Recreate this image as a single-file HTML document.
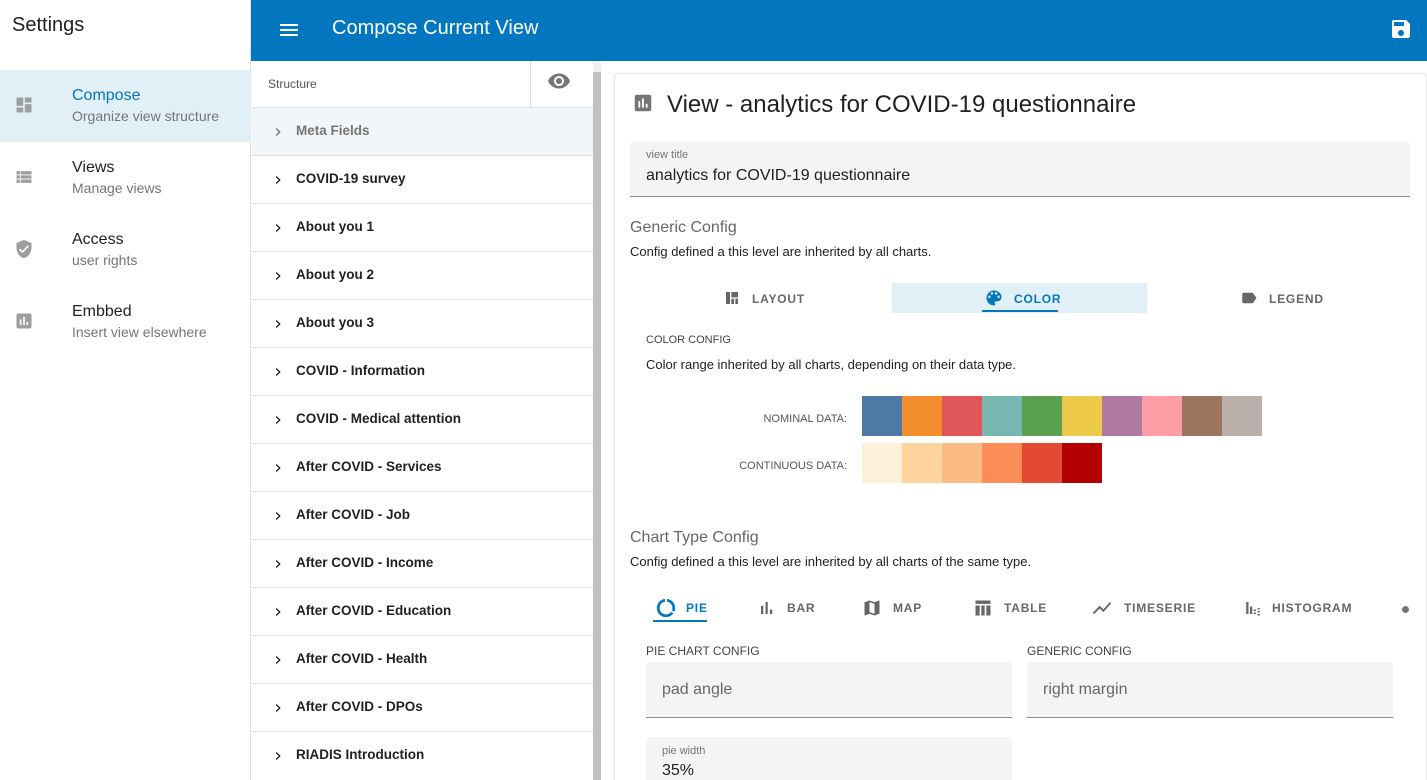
<!DOCTYPE html>
<html><head><style>
*{box-sizing:border-box;margin:0;padding:0}
html,body{width:1427px;height:780px;overflow:hidden}
body{font-family:"Liberation Sans",sans-serif;background:#fff;position:relative;color:#212121}
.abs{position:absolute}
#side{left:0;top:0;width:251px;height:780px;border-right:1px solid #e0e0e0;background:#fff}
#side h1{position:absolute;left:12px;top:14px;font-size:20px;font-weight:normal;color:#212121}
.nav{position:absolute;left:0;width:251px;height:72px}
.nav .t{position:absolute;left:72px;top:17px;font-size:16px;color:#212121}
.nav .s{position:absolute;left:72px;top:38px;font-size:14px;color:#757575}
.nav svg{position:absolute;left:14px;top:25px}
#hdr{left:251px;top:0;width:1176px;height:61px;background:#0277bf;color:#fff}
#struct{left:252px;top:61px;width:341px;height:719px;background:#fff;overflow:hidden}
.row{position:absolute;left:0;width:341px;height:48px;border-bottom:1px solid #e0e0e0;font-size:13.5px;font-weight:bold}
.row span{position:absolute;left:44px;top:15px}
.row svg{position:absolute;left:18px;top:16px}
#scroll{left:593px;top:61px;width:8px;height:719px;background:#f1f1f1}
#card{left:614px;top:73px;width:813px;height:707px;border:1px solid #e8e8e8;border-bottom:none;border-radius:4px 4px 0 0;box-shadow:0 1px 3px rgba(0,0,0,.12);background:#fff;overflow:hidden}
.field{position:absolute;background:#f4f4f4;border-bottom:1px solid #8a8a8a;border-radius:4px 4px 0 0}
.lbl{font-size:12px;color:#757575}
.tab{position:absolute;font-size:12px;letter-spacing:.8px;color:#666;font-weight:bold}
.sw{position:absolute;width:40px;height:40px}
</style></head><body>
<div id="side" class="abs">
<h1>Settings</h1>
<div class="nav" style="top:70px;background:#e1eff7">
<svg width="20" height="20" viewBox="0 0 24 24"><path fill="#9e9e9e" d="M3 13h8V3H3zm0 8h8v-6H3zm10 0h8V11h-8zm0-18v6h8V3z"/></svg>
<div class="t" style="color:#0277bd">Compose</div><div class="s">Organize view structure</div></div>
<div class="nav" style="top:142px">
<svg width="20" height="20" viewBox="0 0 24 24"><path fill="#9e9e9e" d="M3 14h4v-4H3zm0 5h4v-4H3zM3 9h4V5H3zm5 5h13v-4H8zm0 5h13v-4H8zM8 5v4h13V5z"/></svg>
<div class="t">Views</div><div class="s">Manage views</div></div>
<div class="nav" style="top:214px">
<svg width="20" height="20" viewBox="0 0 24 24"><path fill="#9e9e9e" d="M12 1L3 5v6c0 5.55 3.84 10.74 9 12 5.160-1.26 9-6.45 9-12V5zm-2 16l-4-4 1.41-1.41L10 14.17l6.59-6.590L18 9z"/></svg>
<div class="t">Access</div><div class="s">user rights</div></div>
<div class="nav" style="top:286px">
<svg width="20" height="20" viewBox="0 0 24 24"><path fill="#9e9e9e" d="M19 3H5c-1.1 0-2 .9-2 2v14c0 1.1.9 2 2 2h14c1.1 0 2-.9 2-2V5c0-1.1-.9-2-2-2zM9 17H7v-7h2zm4 0h-2V7h2zm4 0h-2v-4h2z"/></svg>
<div class="t">Embbed</div><div class="s">Insert view elsewhere</div></div>
</div>
<div id="hdr" class="abs">
<svg class="abs" style="left:26px;top:18px" width="24" height="24" viewBox="0 0 24 24"><path fill="#fff" d="M3 18h18v-2H3zm0-5h18v-2H3zm0-7v2h18V6z"/></svg>
<div class="abs" style="left:81px;top:17px;font-size:20px">Compose Current View</div>
<svg class="abs" style="left:1138px;top:17px" width="24" height="24" viewBox="0 0 24 24"><path fill="#fff" d="M17 3H5a2 2 0 0 0-2 2v14a2 2 0 0 0 2 2h14c1.1 0 2-.9 2-2V7zm-5 16c-1.66 0-3-1.34-3-3s1.34-3 3-3 3 1.34 3 3-1.34 3-3 3zm3-10H5V5h10z"/></svg>
</div>
<div id="struct" class="abs">
<div class="abs" style="left:0;top:0;width:341px;height:47px;border-bottom:1px solid #e0e0e0">
<div class="abs" style="left:16px;top:16px;font-size:12px;color:#555">Structure</div>
<div class="abs" style="left:278px;top:0;width:1px;height:47px;background:#e0e0e0"></div>
<svg class="abs" style="left:295px;top:8px" width="24" height="24" viewBox="0 0 24 24"><path fill="#757575" d="M12 4.5C7 4.5 2.730 7.61 1 12c1.73 4.39 6 7.5 11 7.5s9.27-3.11 11-7.5c-1.73-4.39-6-7.5-11-7.5zM12 17c-2.76 0-5-2.24-5-5s2.24-5 5-5 5 2.24 5 5-2.24 5-5 5zm0-8c-1.66 0-3 1.34-3 3s1.34 3 3 3 3-1.34 3-3-1.34-3-3-3z"/></svg>
</div>
<div class="row" style="top:47px;background:#f3f6f9;color:#757575"><svg width="16" height="16" viewBox="0 0 24 24"><path fill="#757575" d="M10 6L8.59 7.41 13.17 12l-4.58 4.59L10 18l6-6z"/></svg><span>Meta Fields</span></div>
<div class="row" style="top:95px"><svg width="16" height="16" viewBox="0 0 24 24"><path fill="#212121" d="M10 6L8.59 7.41 13.17 12l-4.58 4.59L10 18l6-6z"/></svg><span>COVID-19 survey</span></div>
<div class="row" style="top:143px"><svg width="16" height="16" viewBox="0 0 24 24"><path fill="#212121" d="M10 6L8.59 7.41 13.17 12l-4.58 4.59L10 18l6-6z"/></svg><span>About you 1</span></div>
<div class="row" style="top:191px"><svg width="16" height="16" viewBox="0 0 24 24"><path fill="#212121" d="M10 6L8.59 7.41 13.17 12l-4.58 4.59L10 18l6-6z"/></svg><span>About you 2</span></div>
<div class="row" style="top:239px"><svg width="16" height="16" viewBox="0 0 24 24"><path fill="#212121" d="M10 6L8.59 7.41 13.17 12l-4.58 4.59L10 18l6-6z"/></svg><span>About you 3</span></div>
<div class="row" style="top:287px"><svg width="16" height="16" viewBox="0 0 24 24"><path fill="#212121" d="M10 6L8.59 7.41 13.17 12l-4.58 4.59L10 18l6-6z"/></svg><span>COVID - Information</span></div>
<div class="row" style="top:335px"><svg width="16" height="16" viewBox="0 0 24 24"><path fill="#212121" d="M10 6L8.59 7.41 13.17 12l-4.58 4.59L10 18l6-6z"/></svg><span>COVID - Medical attention</span></div>
<div class="row" style="top:383px"><svg width="16" height="16" viewBox="0 0 24 24"><path fill="#212121" d="M10 6L8.59 7.41 13.17 12l-4.58 4.59L10 18l6-6z"/></svg><span>After COVID - Services</span></div>
<div class="row" style="top:431px"><svg width="16" height="16" viewBox="0 0 24 24"><path fill="#212121" d="M10 6L8.59 7.41 13.17 12l-4.58 4.59L10 18l6-6z"/></svg><span>After COVID - Job</span></div>
<div class="row" style="top:479px"><svg width="16" height="16" viewBox="0 0 24 24"><path fill="#212121" d="M10 6L8.59 7.41 13.17 12l-4.58 4.59L10 18l6-6z"/></svg><span>After COVID - Income</span></div>
<div class="row" style="top:527px"><svg width="16" height="16" viewBox="0 0 24 24"><path fill="#212121" d="M10 6L8.59 7.41 13.17 12l-4.58 4.59L10 18l6-6z"/></svg><span>After COVID - Education</span></div>
<div class="row" style="top:575px"><svg width="16" height="16" viewBox="0 0 24 24"><path fill="#212121" d="M10 6L8.59 7.41 13.17 12l-4.58 4.59L10 18l6-6z"/></svg><span>After COVID - Health</span></div>
<div class="row" style="top:623px"><svg width="16" height="16" viewBox="0 0 24 24"><path fill="#212121" d="M10 6L8.59 7.41 13.17 12l-4.58 4.59L10 18l6-6z"/></svg><span>After COVID - DPOs</span></div>
<div class="row" style="top:671px;border-bottom:none"><svg width="16" height="16" viewBox="0 0 24 24"><path fill="#212121" d="M10 6L8.59 7.41 13.17 12l-4.58 4.59L10 18l6-6z"/></svg><span>RIADIS Introduction</span></div>
</div>
<div id="scroll" class="abs"><div class="abs" style="left:0;top:11px;width:8px;height:708px;background:#c1c1c1"></div></div>
<div id="card" class="abs">
<svg class="abs" style="left:17px;top:18px" width="22" height="22" viewBox="0 0 24 24"><path fill="#757575" d="M19 3H5c-1.1 0-2 .9-2 2v14c0 1.1.9 2 2 2h14c1.1 0 2-.9 2-2V5c0-1.1-.9-2-2-2zM9 17H7v-7h2zm4 0h-2V7h2zm4 0h-2v-4h2z"/></svg>
<div class="abs" style="left:52px;top:17px;font-size:24px">View - analytics for COVID-19 questionnaire</div>
<div class="field" style="left:15px;top:67px;width:780px;height:56px"><div class="lbl abs" style="left:16px;top:8px;font-size:11px">view title</div><div class="abs" style="left:16px;top:26px;font-size:16px">analytics for COVID-19 questionnaire</div></div>
<div class="abs" style="left:15px;top:145px;font-size:16px;color:#666">Generic Config</div>
<div class="abs" style="left:15px;top:170px;font-size:13px">Config defined a this level are inherited by all charts.</div>
<div class="abs" style="left:277px;top:209px;width:255px;height:30px;background:#e1eff7"></div>
<svg class="abs" style="left:108px;top:216px" width="18" height="16" viewBox="0 0 24 24"><path fill="#666" d="M3 3h6v18H3zm8 0h10v8H11zm0 10h4v8h-4zm6 0h4v8h-4z"/></svg>
<div class="tab" style="left:137px;top:218px">LAYOUT</div>
<svg class="abs" style="left:369px;top:214px" width="20" height="20" viewBox="0 0 24 24"><path fill="#0277bd" d="M12 3a9 9 0 0 0 0 18c.83 0 1.5-.67 1.5-1.5 0-.39-.15-.74-.39-1.01-.23-.26-.38-.61-.38-.99 0-.83.67-1.5 1.5-1.5H16c2.76 0 5-2.24 5-5 0-4.42-4.03-8-9-8zm-5.5 9a1.5 1.5 0 1 1 0-3 1.5 1.5 0 0 1 0 3zm3-4a1.5 1.5 0 1 1 0-3 1.5 1.5 0 0 1 0 3zm5 0a1.5 1.5 0 1 1 0-3 1.5 1.5 0 0 1 0 3zm3 4a1.5 1.5 0 1 1 0-3 1.5 1.5 0 0 1 0 3z"/></svg>
<div class="tab" style="left:399px;top:218px;color:#0277bd">COLOR</div>
<div class="abs" style="left:367px;top:236px;width:76px;height:2px;background:#0277bd"></div>
<svg class="abs" style="left:624px;top:215px" width="20" height="18" viewBox="0 0 24 24"><path fill="#666" d="M17.63 5.84C17.27 5.33 16.67 5 16 5L5 5.01C3.9 5.01 3 5.9 3 7v10c0 1.1.9 1.99 2 1.99L16 19c.67 0 1.27-.33 1.63-.84L22 12z"/></svg>
<div class="tab" style="left:654px;top:218px">LEGEND</div>
<div class="abs" style="left:31px;top:260px;font-size:11px;color:#444">COLOR CONFIG</div>
<div class="abs" style="left:31px;top:283px;font-size:13px">Color range inherited by all charts, depending on their data type.</div>
<div class="abs" style="left:0;top:339px;width:232px;text-align:right;font-size:11px;color:#555">NOMINAL DATA:</div>
<div class="abs" style="left:0;top:386px;width:232px;text-align:right;font-size:11px;color:#555">CONTINUOUS DATA:</div>
<div class="sw" style="left:247px;top:322px;background:#4e79a7"></div><div class="sw" style="left:287px;top:322px;background:#f28e2c"></div><div class="sw" style="left:327px;top:322px;background:#e15759"></div><div class="sw" style="left:367px;top:322px;background:#76b7b2"></div><div class="sw" style="left:407px;top:322px;background:#59a14f"></div><div class="sw" style="left:447px;top:322px;background:#edc949"></div><div class="sw" style="left:487px;top:322px;background:#af7aa1"></div><div class="sw" style="left:527px;top:322px;background:#ff9da7"></div><div class="sw" style="left:567px;top:322px;background:#9c755f"></div><div class="sw" style="left:607px;top:322px;background:#bab0ab"></div>
<div class="sw" style="left:247px;top:369px;background:#fff0dc"></div><div class="sw" style="left:287px;top:369px;background:#fdd49e"></div><div class="sw" style="left:327px;top:369px;background:#fdbb84"></div><div class="sw" style="left:367px;top:369px;background:#fc8d59"></div><div class="sw" style="left:407px;top:369px;background:#e34a33"></div><div class="sw" style="left:447px;top:369px;background:#b30000"></div>
<div class="abs" style="left:15px;top:455px;font-size:16px;color:#666">Chart Type Config</div>
<div class="abs" style="left:15px;top:480px;font-size:13px">Config defined a this level are inherited by all charts of the same type.</div>
<svg class="abs" style="left:40px;top:523px" width="22" height="22" viewBox="0 0 24 24"><path fill="#0277bd" d="M13 2.05v3.03c3.39.49 6 3.39 6 6.92 0 .9-.18 1.75-.48 2.54l2.6 1.53c.56-1.24.88-2.62.88-4.07 0-5.18-3.95-9.45-9-9.95zM12 19c-3.87 0-7-3.13-7-7 0-3.53 2.61-6.43 6-6.92V2.05c-5.06.5-9 4.76-9 9.95 0 5.52 4.47 10 9.99 10 3.31 0 6.24-1.61 8.06-4.09l-2.6-1.53C16.17 17.98 14.21 19 12 19z"/></svg>
<div class="tab" style="left:71px;top:527px;color:#0277bd">PIE</div>
<div class="abs" style="left:38px;top:546px;width:54px;height:2px;background:#0277bd"></div>
<svg class="abs" style="left:143px;top:525px" width="18" height="18" viewBox="0 0 24 24"><path fill="#666" d="M4 9h3v11H4zm6-5h3v16h-3zm6 10h3v6h-3z"/></svg>
<div class="tab" style="left:172px;top:527px">BAR</div>
<svg class="abs" style="left:247px;top:524px" width="20" height="20" viewBox="0 0 24 24"><path fill="#666" d="M20.5 3l-.16.03L15 5.1 9 3 3.36 4.9c-.21.07-.36.25-.36.48V20.5c0 .28.22.5.5.5l.16-.03L9 18.9l6 2.1 5.64-1.9c.21-.07.36-.25.36-.48V3.5c0-.28-.22-.5-.5-.5zM15 19l-6-2.11V5l6 2.11z"/></svg>
<div class="tab" style="left:278px;top:527px">MAP</div>
<svg class="abs" style="left:357px;top:524px" width="22" height="20" viewBox="0 0 24 24"><path fill="#666" d="M3 3h18v4H3zm0 6h5v12H3zm7 0h4v12h-4zm6 0h5v12h-5z"/></svg>
<div class="tab" style="left:389px;top:527px">TABLE</div>
<svg class="abs" style="left:476px;top:523px" width="22" height="22" viewBox="0 0 24 24"><path fill="#666" d="M3.5 18.49l6-6.01 4 4L22 6.92l-1.41-1.41-7.09 7.97-4-4L2 16.99z"/></svg>
<div class="tab" style="left:509px;top:527px">TIMESERIE</div>
<svg class="abs" style="left:629px;top:525px" width="18" height="18" viewBox="0 0 24 24"><path fill="#666" d="M3 4h3v16H3zm5 6h3v10H8zm5 4h3v2h-3zm0 4h3v2h-3zm5-6h3v2h-3zm0 4h3v2h-3zm0 4h3v2h-3z"/></svg>
<div class="tab" style="left:657px;top:527px">HISTOGRAM</div>
<div class="abs" style="left:787px;top:532px;width:7px;height:7px;border-radius:50%;background:#777"></div>
<div class="abs" style="left:31px;top:570px;font-size:12px;color:#444">PIE CHART CONFIG</div>
<div class="abs" style="left:412px;top:570px;font-size:12px;color:#444">GENERIC CONFIG</div>
<div class="field" style="left:31px;top:588px;width:366px;height:56px"><div class="abs" style="left:16px;top:19px;font-size:16px;color:#666">pad angle</div></div>
<div class="field" style="left:412px;top:588px;width:366px;height:56px"><div class="abs" style="left:16px;top:19px;font-size:16px;color:#666">right margin</div></div>
<div class="field" style="left:31px;top:663px;width:366px;height:56px;border-bottom:none"><div class="lbl abs" style="left:16px;top:8px;font-size:11px">pie width</div><div class="abs" style="left:16px;top:25px;font-size:16px">35%</div></div>
</div>
</body></html>
